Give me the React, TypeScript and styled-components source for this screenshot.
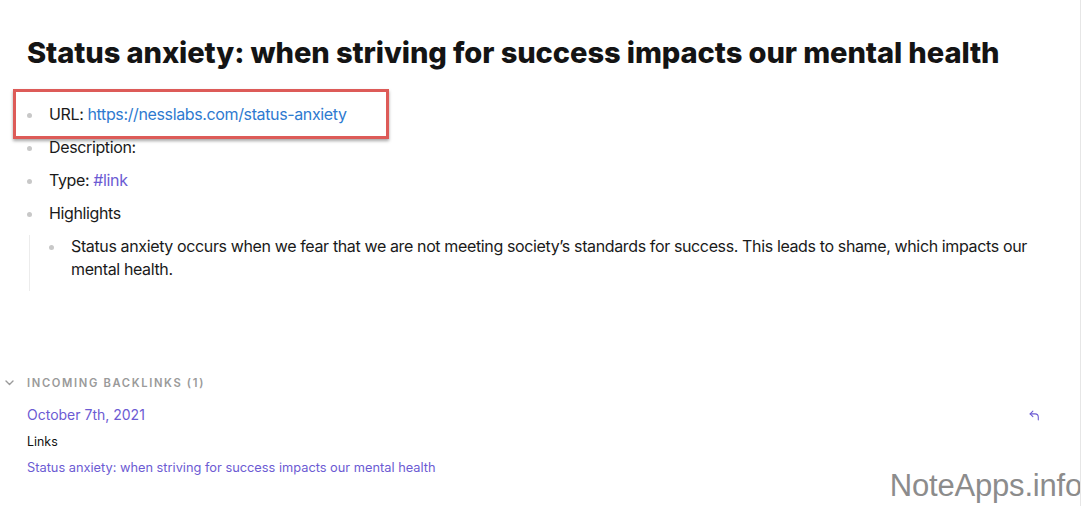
import React from "react";
import styled, { createGlobalStyle } from "styled-components";

const Global = createGlobalStyle`
  html, body { margin: 0; padding: 0; background: #ffffff; }
  body { font-family: Inter, "Noto Sans", sans-serif; color: #111; -webkit-font-smoothing: antialiased; }
`;

const Page = styled.div`
  position: relative;
  width: 1080px;
  height: 506px;
  border-right: 1px solid #e6e6e6;
  background: #fff;
  overflow: hidden;
`;

const Article = styled.main`
  padding: 33px 0 0 27px;
`;

const Title = styled.h1`
  margin: 0;
  font-family: Inter, sans-serif;
  font-weight: 800;
  font-size: 29.1px;
  line-height: 40px;
  letter-spacing: -0.1px;
  color: #141414;
`;

const List = styled.ul`
  list-style: none;
  margin: 30px 0 0 0;
  padding: 0 40px 0 0;
`;

const Item = styled.li`
  position: relative;
  display: grid;
  grid-template-columns: 22px 1fr;
  margin-bottom: 10px;
  font-family: Inter, sans-serif;
  font-size: 16px;
  letter-spacing: -0.37px;
  line-height: 23px;
  color: #1a1a1a;
`;

const Bullet = styled.span`
  display: flex;
  align-items: flex-start;
  padding-top: 10px;
  &::before {
    content: "";
    width: 5px;
    height: 5px;
    border-radius: 50%;
    background: #c8c8c8;
  }
`;

const Content = styled.div``;

const Children = styled.ul`
  list-style: none;
  margin: 10px 0 0 2px;
  padding: 0 0 0 19px;
  border-left: 1px solid #ececec;
  grid-column: 1 / span 2;
`;

const ExternalLink = styled.a`
  color: #2e7ad0;
  text-decoration: none;
`;

const Tag = styled.a`
  color: #6c5bd3;
  text-decoration: none;
`;

const Annotation = styled.div`
  position: absolute;
  left: -14px;
  top: -14px;
  width: 370px;
  height: 44px;
  border: 3px solid #dd5b58;
  box-shadow: 0 2px 3px rgba(0, 0, 0, 0.35);
  pointer-events: none;
`;

const Backlinks = styled.section`
  margin-top: 85px;
  padding: 0 39px 0 0;
`;

const BacklinksHeader = styled.div`
  display: flex;
  align-items: center;
  gap: 13px;
  padding-left: 5px;
  font-family: Inter, sans-serif;
  font-size: 11.2px;
  font-weight: 600;
  letter-spacing: 1.65px;
  color: #9a9a9a;
  text-transform: uppercase;
`;

const BacklinkBody = styled.div`
  padding-left: 27px;
  margin-top: 15px;
`;

const BacklinkTop = styled.div`
  display: flex;
  justify-content: space-between;
  align-items: center;
`;

const PageRef = styled.a`
  font-family: Inter, sans-serif;
  font-size: 14px;
  color: #6c5bd3;
  text-decoration: none;
  line-height: 20px;
`;

const Small = styled.div<{ $purple?: boolean }>`
  font-family: Inter, sans-serif;
  font-size: ${(p) => (p.$purple ? "12.8px" : "12.4px")};
  line-height: 18px;
  margin-top: 8px;
  color: ${(p) => (p.$purple ? "#6c5bd3" : "#111")};
`;

const Watermark = styled.div`
  position: absolute;
  right: -2px;
  bottom: 2px;
  font-family: "Liberation Sans", Arial, sans-serif;
  font-size: 31px;
  color: #8c8c8c;
  letter-spacing: -0.2px;
`;

const Chevron = () => (
  <svg width="9" height="6" viewBox="0 0 9 6" fill="none">
    <path d="M1 1l3.5 3.5L8 1" stroke="#9a9a9a" strokeWidth="1.4" strokeLinecap="round" strokeLinejoin="round" />
  </svg>
);

const ReplyIcon = () => (
  <svg width="13" height="13" viewBox="0 0 24 24" fill="none" stroke="#6c5bd3" strokeWidth="2" strokeLinecap="round" strokeLinejoin="round">
    <path d="m9 14-5-5 5-5" />
    <path d="M4 9h9a6 6 0 0 1 6 6v5" />
  </svg>
);

export default function App() {
  return (
    <>
      <Global />
      <Page>
        <Article>
          <Title>Status anxiety: when striving for success impacts our mental health</Title>
          <List>
            <Item>
              <Bullet />
              <Content>
                URL: <ExternalLink href="#">https://nesslabs.com/status-anxiety</ExternalLink>
              </Content>
              <Annotation />
            </Item>
            <Item>
              <Bullet />
              <Content>Description:</Content>
            </Item>
            <Item>
              <Bullet />
              <Content>
                Type: <Tag href="#">#link</Tag>
              </Content>
            </Item>
            <Item>
              <Bullet />
              <Content>Highlights</Content>
              <Children>
                <Item>
                  <Bullet />
                  <Content>
                    Status anxiety occurs when we fear that we are not meeting society’s standards for success. This leads to shame, which impacts our mental health.
                  </Content>
                </Item>
              </Children>
            </Item>
          </List>
        </Article>
        <Backlinks>
          <BacklinksHeader>
            <Chevron />
            <span>Incoming Backlinks (1)</span>
          </BacklinksHeader>
          <BacklinkBody>
            <BacklinkTop>
              <PageRef href="#">October 7th, 2021</PageRef>
              <ReplyIcon />
            </BacklinkTop>
            <Small>Links</Small>
            <Small $purple>Status anxiety: when striving for success impacts our mental health</Small>
          </BacklinkBody>
        </Backlinks>
        <Watermark>NoteApps.info</Watermark>
      </Page>
    </>
  );
}
